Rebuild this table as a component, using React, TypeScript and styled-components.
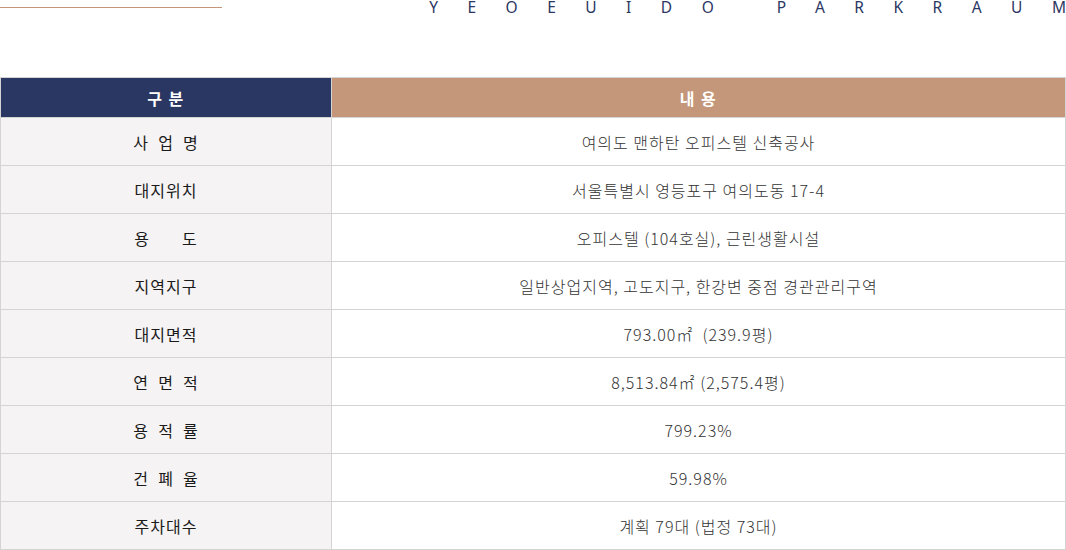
import React from "react";
import styled, { createGlobalStyle } from "styled-components";

const Global = createGlobalStyle`
  html, body { margin: 0; padding: 0; background: #fff; }
  body { font-family: "Noto Sans CJK KR", "Noto Sans", sans-serif; }
`;

const Page = styled.div`
  width: 1066px;
`;

const TopBar = styled.div`
  display: flex;
  justify-content: space-between;
  align-items: flex-start;
  height: 77px;
`;

const Rule = styled.div`
  width: 222px;
  height: 1px;
  margin-top: 7px;
  background: #c4977a;
`;

const Brand = styled.div`
  font-family: "Noto Sans", "Open Sans", sans-serif;
  font-weight: 400;
  font-size: 15.5px;
  line-height: 15px;
  letter-spacing: 29.5px;
  color: #2b3763;
  white-space: pre;
`;

const BrandLast = styled.span`
  letter-spacing: 0;
`;

const Table = styled.table`
  width: 1066px;
  border-collapse: collapse;
  table-layout: fixed;
`;

const Head = styled.th<{ $tone: "navy" | "tan" }>`
  height: 39px;
  padding: 0;
  background: ${(p) => (p.$tone === "navy" ? "#2b3763" : "#c4977a")};
  color: #fff;
  font-size: 16px;
  font-weight: 700;
  letter-spacing: 1.5px;
  border: 1px solid #d4d4d4;
  white-space: pre;
`;

const Label = styled.td`
  height: 47px;
  padding: 0;
  background: #f5f3f3;
  border: 1px solid #d4d4d4;
  text-align: center;
  font-size: 16px;
  font-weight: 400;
  letter-spacing: 1px;
  color: #1a1a1a;
  white-space: pre;
`;

const Value = styled.td`
  height: 47px;
  padding: 0;
  background: #fff;
  border: 1px solid #d4d4d4;
  text-align: center;
  font-size: 16px;
  font-weight: 300;
  letter-spacing: 1px;
  color: #333;
  white-space: pre;
`;

const rows: [string, string][] = [
  ["사  업  명", "여의도 맨하탄 오피스텔 신축공사"],
  ["대지위치", "서울특별시 영등포구 여의도동 17-4"],
  ["용       도", "오피스텔 (104호실), 근린생활시설"],
  ["지역지구", "일반상업지역, 고도지구, 한강변 중점 경관관리구역"],
  ["대지면적", "793.00㎡  (239.9평)"],
  ["연  면  적", "8,513.84㎡ (2,575.4평)"],
  ["용  적  률", "799.23%"],
  ["건  폐  율", "59.98%"],
  ["주차대수", "계획 79대 (법정 73대)"],
];

export default function App() {
  return (
    <Page>
      <Global />
      <TopBar>
        <Rule />
        <Brand>
          YEOEUIDO PARKRAU<BrandLast>M</BrandLast>
        </Brand>
      </TopBar>
      <Table>
        <colgroup>
          <col style={{ width: 331 }} />
          <col />
        </colgroup>
        <thead>
          <tr>
            <Head $tone="navy">구 분</Head>
            <Head $tone="tan">내 용</Head>
          </tr>
        </thead>
        <tbody>
          {rows.map(([k, v]) => (
            <tr key={k}>
              <Label>{k}</Label>
              <Value>{v}</Value>
            </tr>
          ))}
        </tbody>
      </Table>
    </Page>
  );
}
